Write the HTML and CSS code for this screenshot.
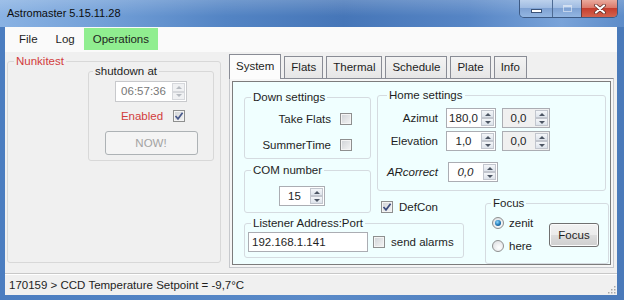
FILE: index.html
```html
<!DOCTYPE html>
<html lang="en">
<head>
    <meta charset="UTF-8">
    <meta name="viewport" content="width=device-width, initial-scale=1.0">
    <title>Astromaster 5.15.11.28</title>
    <link rel="stylesheet" href="styles.css">
</head>
<body>
    <div class="window">
        <div class="titlebar">
            <span class="title">Astromaster 5.15.11.28</span>
            <div class="caption-buttons">
                <span class="cap-btn cap-min"><span class="glyph-min"></span></span>
                <span class="cap-btn cap-max"><span class="glyph-max"></span></span>
                <span class="cap-btn cap-close">
                    <svg width="12" height="10" viewBox="0 0 12 10">
                        <path d="M2 1.5 L10 8.5 M10 1.5 L2 8.5" stroke="#5a2a24" stroke-width="3.6" stroke-linecap="round"/>
                        <path d="M2 1.5 L10 8.5 M10 1.5 L2 8.5" stroke="#ffffff" stroke-width="2.2" stroke-linecap="round"/>
                    </svg>
                </span>
            </div>
        </div>

        <div class="client">
            <ul class="menu">
                <li>File</li>
                <li>Log</li>
                <li class="active">Operations</li>
            </ul>

            <div class="main">
                <fieldset class="group group-left">
                    <legend class="red">Nunkitest</legend>
                    <fieldset class="group group-shutdown">
                        <legend>shutdown at</legend>
                        <div class="stack">
                            <div class="spin spin-time spin-disabled">
                                <span class="spin-value">06:57:36</span>
                                <span class="spin-arrows"><i class="arrow up"></i><i class="arrow down"></i></span>
                            </div>
                            <div class="check-row enabled-row">
                                <span class="red">Enabled</span>
                                <span class="check">
                                    <svg width="10" height="10" viewBox="0 0 10 10"><path d="M1.5 5 L4 7.8 L8.6 1.8" fill="none" stroke="#4a5a8c" stroke-width="1.7"/></svg>
                                </span>
                            </div>
                            <button class="btn btn-now" disabled>NOW!</button>
                        </div>
                    </fieldset>
                </fieldset>

                <div class="tabs">
                    <div class="tab-strip">
                        <span class="tab selected">System</span>
                        <span class="tab">Flats</span>
                        <span class="tab">Thermal</span>
                        <span class="tab">Schedule</span>
                        <span class="tab">Plate</span>
                        <span class="tab">Info</span>
                    </div>
                    <div class="tab-page">
                        <div class="panel">
                            <fieldset class="group g-down">
                                <legend>Down settings</legend>
                                <div class="check-row down-row">
                                    <span>Take Flats</span>
                                    <span class="check"></span>
                                </div>
                                <div class="check-row down-row">
                                    <span>SummerTime</span>
                                    <span class="check"></span>
                                </div>
                            </fieldset>

                            <fieldset class="group g-home">
                                <legend>Home settings</legend>
                                <div class="home-row">
                                    <span class="home-label">Azimut</span>
                                    <div class="spin spin-home">
                                        <span class="spin-value">180,0</span>
                                        <span class="spin-arrows"><i class="arrow up"></i><i class="arrow down"></i></span>
                                    </div>
                                    <div class="spin spin-home2 spin-ro">
                                        <span class="spin-value">0,0</span>
                                        <span class="spin-arrows"><i class="arrow up"></i><i class="arrow down"></i></span>
                                    </div>
                                </div>
                                <div class="home-row">
                                    <span class="home-label">Elevation</span>
                                    <div class="spin spin-home">
                                        <span class="spin-value">1,0</span>
                                        <span class="spin-arrows"><i class="arrow up"></i><i class="arrow down"></i></span>
                                    </div>
                                    <div class="spin spin-home2 spin-ro">
                                        <span class="spin-value">0,0</span>
                                        <span class="spin-arrows"><i class="arrow up"></i><i class="arrow down"></i></span>
                                    </div>
                                </div>
                                <div class="home-row home-row-ar">
                                    <span class="home-label italic">ARcorrect</span>
                                    <div class="spin spin-home spin-ar">
                                        <span class="spin-value italic">0,0</span>
                                        <span class="spin-arrows"><i class="arrow up"></i><i class="arrow down"></i></span>
                                    </div>
                                </div>
                            </fieldset>

                            <fieldset class="group g-com">
                                <legend>COM number</legend>
                                <div class="spin spin-com">
                                    <span class="spin-value">15</span>
                                    <span class="spin-arrows"><i class="arrow up"></i><i class="arrow down"></i></span>
                                </div>
                            </fieldset>

                            <div class="check-row defcon">
                                <span class="check">
                                    <svg width="10" height="10" viewBox="0 0 10 10"><path d="M1.5 5 L4 7.8 L8.6 1.8" fill="none" stroke="#3a4a7c" stroke-width="1.7"/></svg>
                                </span>
                                <span>DefCon</span>
                            </div>

                            <fieldset class="group g-listen">
                                <legend>Listener Address:Port</legend>
                                <div class="listen-row">
                                    <input class="textbox" type="text" value="192.168.1.141" readonly>
                                    <span class="check"></span>
                                    <span class="listen-text">send alarms</span>
                                </div>
                            </fieldset>

                            <fieldset class="group g-focus">
                                <legend>Focus</legend>
                                <div class="focus-body">
                                    <div class="radios">
                                        <div class="radio-row"><span class="radio checked"><span class="dot"></span></span><span>zenit</span></div>
                                        <div class="radio-row"><span class="radio"></span><span>here</span></div>
                                    </div>
                                    <button class="btn btn-focus">Focus</button>
                                </div>
                            </fieldset>
                        </div>
                    </div>
                </div>
            </div>

            <div class="statusbar">
                <span>170159 &gt; CCD Temperature Setpoint = -9,7°C</span>
                <svg class="grip" width="8" height="9" viewBox="0 0 8 9">
                    <rect x="6" y="1" width="1.5" height="1.5" fill="#a8a8a8"/>
                    <rect x="3" y="4" width="1.5" height="1.5" fill="#a8a8a8"/>
                    <rect x="6" y="4" width="1.5" height="1.5" fill="#a8a8a8"/>
                    <rect x="0" y="7" width="1.5" height="1.5" fill="#a8a8a8"/>
                    <rect x="3" y="7" width="1.5" height="1.5" fill="#a8a8a8"/>
                    <rect x="6" y="7" width="1.5" height="1.5" fill="#a8a8a8"/>
                </svg>
            </div>
        </div>
    </div>
</body>
</html>
```

FILE: styles.css
```css
* {
    box-sizing: border-box;
}
body {
    margin: 0;
    width: 624px;
    height: 300px;
    overflow: hidden;
    font-family: "Liberation Sans", Arial, sans-serif;
    font-size: 11.5px;
    color: #1e1e1e;
    background: #4f7fbe;
}
.window {
    width: 624px;
    height: 300px;
    display: flex;
    flex-direction: column;
    background: linear-gradient(90deg, #4b7dc0, #5a8ac8 50%, #4a7aba);
}

/* title bar */
.titlebar {
    height: 27px;
    flex: none;
    display: flex;
    align-items: flex-start;
    padding: 0 6px 0 7px;
    background:
        linear-gradient(rgba(255, 255, 255, 0.18), rgba(255, 255, 255, 0) 60%),
        linear-gradient(90deg, #89b2e3 0%, #73a0d8 16%, #5384c4 36%, #4676b8 55%, #5685c5 75%, #79a3d9 90%, #5d8cc9 100%);
}
.title {
    font-size: 11px;
    line-height: 26px;
    color: #0d0d0d;
}
.caption-buttons {
    margin-left: auto;
    display: flex;
    height: 18px;
    border: 1px solid #3d5a84;
    border-top: none;
    border-radius: 0 0 5px 5px;
    overflow: hidden;
}
.cap-btn {
    display: flex;
    align-items: center;
    justify-content: center;
    height: 100%;
}
.cap-min {
    width: 32px;
    background: linear-gradient(#bcd1ec, #a0bce2 45%, #7fa2d3 50%, #93b6e2);
}
.cap-max {
    width: 29px;
    border-left: 1px solid #4e6b93;
    background: linear-gradient(#bcd1ec, #a0bce2 45%, #7fa2d3 50%, #93b6e2);
}
.cap-close {
    width: 36px;
    border-left: 1px solid #6b3a3a;
    background: linear-gradient(#eaaa9d, #db7a6b 45%, #c63e2e 50%, #d3644f);
}
.glyph-min {
    width: 11px;
    height: 4px;
    margin-top: 5px;
    background: #ffffff;
    border: 1px solid #3b5378;
}
.glyph-max {
    width: 9px;
    height: 7px;
    border: 1px solid rgba(255, 255, 255, 0.5);
    box-shadow: inset 0 1px 0 rgba(255, 255, 255, 0.5);
}

/* client area */
.client {
    flex: none;
    height: 268px;
    margin: 0 7px 0 5px;
    display: flex;
    flex-direction: column;
    background: #f0f0f0;
}
.menu {
    list-style: none;
    margin: 0;
    padding: 1px 0 0 5px;
    height: 25px;
    flex: none;
    display: flex;
    background: #fafafa;
}
.menu li {
    padding: 0 9px;
    height: 22px;
    line-height: 22px;
}
.menu li.active {
    background: #90ee90;
}
.main {
    height: 221px;
    flex: none;
    display: flex;
    align-items: flex-start;
}
.red {
    color: #d23c3c;
}
.italic {
    font-style: italic;
}

/* group boxes */
.group {
    margin: 0;
    padding: 0;
    min-width: 0;
    border: 1px solid #d5dbe0;
    border-radius: 3px;
}
.group legend {
    padding: 0 2px;
    margin-left: 6px;
    line-height: 12px;
}
.group-left {
    margin: 3px 0 0 2px;
    width: 214px;
    height: 208px;
    border-color: #d8d8d8;
}
.group-shutdown {
    margin: -2px 0 0 80px;
    width: 126px;
    height: 96px;
    border-color: #d8d8d8;
}
.group-shutdown legend {
    margin-left: 4px;
}
.stack {
    display: flex;
    flex-direction: column;
    align-items: center;
}

/* spinners */
.spin {
    display: flex;
    height: 20px;
    border: 1px solid #abadb3;
    background: #ffffff;
}
.spin-value {
    flex: 1;
    text-align: center;
    line-height: 18px;
}
.spin-arrows {
    width: 15px;
    padding: 1px;
    display: flex;
    flex-direction: column;
}
.arrow {
    flex: 1;
    display: flex;
    align-items: center;
    justify-content: center;
    border: 1px solid #c2c6ce;
    background: linear-gradient(#f4f6f9, #dde3eb);
}
.arrow.up::before {
    content: "";
    border-left: 3px solid transparent;
    border-right: 3px solid transparent;
    border-bottom: 3px solid #4d5664;
}
.arrow.down::before {
    content: "";
    border-left: 3px solid transparent;
    border-right: 3px solid transparent;
    border-top: 3px solid #4d5664;
}
.spin-time {
    width: 72px;
    height: 21px;
    margin-top: 4px;
}
.spin-disabled {
    border-color: #c8c9cc;
    color: #777777;
}
.spin-disabled .arrow {
    border-color: #d6d8dc;
    background: #f0f1f3;
}
.spin-disabled .arrow::before {
    opacity: 0.35;
}
.spin-ro {
    background: #f0f0f0;
}
.spin-home {
    width: 50px;
}
.spin-home2 {
    width: 48px;
    margin-left: 6px;
}
.spin-ar {
    margin-left: 2px;
}
.spin-com {
    width: 46px;
    margin: 10px 0 0 34px;
}

/* checkboxes and radios */
.check-row {
    display: flex;
    align-items: center;
    height: 14px;
}
.check {
    width: 12px;
    height: 12px;
    flex: none;
    display: flex;
    align-items: center;
    justify-content: center;
    border: 1px solid #8e8f8f;
    background: linear-gradient(135deg, #cfd2d6, #f5f5f5);
    box-shadow: inset 0 0 0 1px #f4f4f4;
}
.enabled-row {
    margin-top: 7px;
    gap: 10px;
    padding-left: 4px;
}
.down-row {
    justify-content: flex-end;
    gap: 9px;
    padding-right: 18px;
    margin-top: 9px;
}
.down-row + .down-row {
    margin-top: 12px;
}
.radio {
    width: 12px;
    height: 12px;
    flex: none;
    display: flex;
    align-items: center;
    justify-content: center;
    border: 1px solid #8e8f8f;
    border-radius: 50%;
    background: radial-gradient(circle at 60% 65%, #ffffff, #d8dadd);
}
.dot {
    width: 6px;
    height: 6px;
    border-radius: 50%;
    background: radial-gradient(circle at 40% 35%, #8fd8ff, #1f77b4 55%, #0e3f6c);
}

/* buttons */
.btn {
    font: inherit;
    color: #1e1e1e;
    border: 1px solid #707070;
    border-radius: 3px;
    background: linear-gradient(#f2f2f2 0%, #ebebeb 50%, #dddddd 50%, #cfcfcf 100%);
    box-shadow: inset 0 0 0 1px #fbfbfb;
    padding: 0;
}
.btn-now {
    width: 93px;
    height: 24px;
    margin-top: 8px;
    color: #a3a3a3;
    border-color: #adb2b5;
    background: #f4f4f4;
    box-shadow: none;
}
.btn-focus {
    width: 50px;
    height: 24px;
    margin: 14px 9px 0 auto;
}

/* tabs */
.tabs {
    width: 385px;
    margin: 2px 0 0 8px;
    display: flex;
    flex-direction: column;
}
.tab-strip {
    height: 24px;
    display: flex;
    align-items: flex-end;
}
.tab {
    height: 22px;
    line-height: 20px;
    padding: 0 6px;
    margin-right: 3px;
    border: 1px solid #898c95;
    border-bottom: none;
    background: linear-gradient(#f3f3f3, #e6e6e6);
}
.tab.selected {
    height: 25px;
    line-height: 23px;
    margin-bottom: -1px;
    position: relative;
    z-index: 1;
    background: #fcfcfc;
}
.tab-page {
    height: 190px;
    padding: 2px;
    border: 1px solid #9a9ca3;
    border-color: #898c95 #c6c8cc #c6c8cc #c6c8cc;
    background: #f6f6f6;
}
.panel {
    height: 100%;
    border: 1px solid #7c7c7c;
    background: #f0ffff;
    padding: 7px 0 0 11px;
    display: grid;
    grid-template-columns: 127px 6px 87px 21px 124px;
    grid-template-rows: 75px 33px 20px 47px;
    align-items: start;
}
.g-down {
    grid-column: 1;
    grid-row: 1;
    margin-top: 2px;
    height: 68px;
}
.g-home {
    grid-column: 3 / 6;
    grid-row: 1 / 3;
    height: 102px;
    margin-right: 3px;
    padding-left: 3px;
}
.home-row {
    display: flex;
    align-items: center;
    margin-top: 7px;
}
.home-row + .home-row {
    margin-top: 3px;
}
.home-row.home-row-ar {
    margin-top: 11px;
}
.home-label {
    width: 57px;
    margin-right: 8px;
    text-align: right;
}
.g-com {
    grid-column: 1;
    grid-row: 2 / 4;
    height: 49px;
}
.defcon {
    grid-column: 3 / 5;
    grid-row: 3;
    margin-top: 3px;
    padding-left: 4px;
    gap: 6px;
}
.g-listen {
    grid-column: 1 / 4;
    grid-row: 4;
    height: 41px;
}
.listen-row {
    display: flex;
    align-items: center;
    margin-top: 3px;
    padding-left: 3px;
}
.textbox {
    width: 120px;
    height: 20px;
    margin: 0;
    padding: 0 3px;
    font: inherit;
    color: #1e1e1e;
    border: 1px solid #abadb3;
    background: #ffffff;
    outline: none;
}
.listen-row .check {
    margin-left: 5px;
}
.listen-text {
    margin-left: 6px;
}
.g-focus {
    grid-column: 5;
    grid-row: 3 / 5;
    height: 67px;
}
.g-focus legend {
    margin-left: 5px;
}
.focus-body {
    display: flex;
    align-items: flex-start;
}
.radios {
    padding: 7px 0 0 6px;
    display: flex;
    flex-direction: column;
    gap: 10px;
}
.radio-row {
    display: flex;
    align-items: center;
    gap: 5px;
    height: 13px;
}

/* status bar */
.statusbar {
    flex: none;
    height: 22px;
    display: flex;
    align-items: center;
    padding: 0 1px 0 4px;
    border-top: 1px solid #c8c8c8;
    box-shadow: inset 0 1px 0 #ffffff;
}
.grip {
    margin: 9px 0 0 auto;
}
```
